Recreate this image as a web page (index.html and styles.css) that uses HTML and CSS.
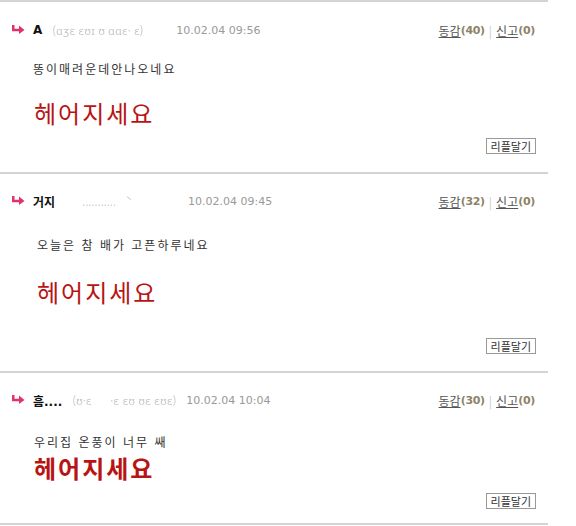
FILE: index.html
```html
<!DOCTYPE html>
<html lang="ko">
<head>
  <meta charset="UTF-8" />
  <title>댓글</title>
  <link rel="stylesheet" href="styles.css">
</head>
<body>
  <div class="list">
    <div class="comment c1">
      <div class="head">
        <svg class="arrow" width="13" height="9" viewBox="0 0 13 9"><path d="M1.2 0 V5 H8" fill="none" stroke="#e0336a" stroke-width="2.6"/><path d="M7 0.5 L12.5 5 L7 9 Z" fill="#e0336a"/></svg>
        <span class="name">A</span>
        <span class="uid" style="width:124px">(ɑʒɛ ɛʊɪ ʊ  ɑɑɛ·   ɛ)</span>
        <span class="date">10.02.04 09:56</span>
        <span class="acts"><a>동감</a><b>(40)</b><i>|</i><a>신고</a><b>(0)</b></span>
      </div>
      <p class="text">똥이매려운데안나오네요</p>
      <p class="big">헤어지세요</p>
      <div class="foot"><button>리플달기</button></div>
    </div>

    <div class="comment c2">
      <div class="head">
        <svg class="arrow" width="13" height="9" viewBox="0 0 13 9"><path d="M1.2 0 V5 H8" fill="none" stroke="#e0336a" stroke-width="2.6"/><path d="M7 0.5 L12.5 5 L7 9 Z" fill="#e0336a"/></svg>
        <span class="name">거지</span>
        <span class="uid" style="width:123px">&nbsp;&nbsp;&nbsp;&nbsp;&nbsp;&nbsp;&nbsp;........... &nbsp;&nbsp; ˋ</span>
        <span class="date">10.02.04 09:45</span>
        <span class="acts"><a>동감</a><b>(32)</b><i>|</i><a>신고</a><b>(0)</b></span>
      </div>
      <p class="text">오늘은 참 배가 고픈하루네요</p>
      <p class="big">헤어지세요</p>
      <div class="foot"><button>리플달기</button></div>
    </div>

    <div class="comment c3">
      <div class="head">
        <svg class="arrow" width="13" height="9" viewBox="0 0 13 9"><path d="M1.2 0 V5 H8" fill="none" stroke="#e0336a" stroke-width="2.6"/><path d="M7 0.5 L12.5 5 L7 9 Z" fill="#e0336a"/></svg>
        <span class="name">흠....</span>
        <span class="uid" style="width:114px">(ʊ·ɛ &nbsp;&nbsp;&nbsp;&nbsp; ·ɛ ɛʊ ʊɛ ɛʊɛ)</span>
        <span class="date">10.02.04 10:04</span>
        <span class="acts"><a>동감</a><b>(30)</b><i>|</i><a>신고</a><b>(0)</b></span>
      </div>
      <p class="text">우리집 온풍이 너무 쌔</p>
      <p class="big">헤어지세요</p>
      <div class="foot"><button>리플달기</button></div>
    </div>
  </div>
</body>
</html>
```

FILE: styles.css
```css
body {
  margin: 0;
  background: #fff;
  font-family: "Noto Sans CJK KR", "DejaVu Sans", sans-serif;
  color: #333;
}

.list {
  width: 548px;
  border-top: 2px solid #d4d4d4;
}

.comment {
  border-bottom: 2px solid #d4d4d4;
  box-sizing: border-box;
}

.head {
  display: flex;
  align-items: center;
  height: 16px;
  padding: 0 13px 0 12px;
  font-size: 12px;
}

.arrow {
  flex: none;
  margin-top: -2px;
}

.name {
  margin-left: 8px;
  font-weight: bold;
  color: #111;
  font-family: "DejaVu Sans", "Noto Sans CJK KR", sans-serif;
  font-size: 12px;
}

.uid {
  flex: none;
  display: inline-block;
  padding-left: 10px;
  color: #c8c8c8;
  font-size: 11px;
  white-space: nowrap;
  overflow: hidden;
  filter: blur(0.7px);
}

.date {
  color: #999;
  font-family: "DejaVu Sans", sans-serif;
  font-size: 11px;
}

.acts {
  margin-left: auto;
  display: flex;
  align-items: center;
  font-size: 12px;
}

.acts a {
  color: #555;
  text-decoration: underline;
}

.acts b {
  color: #8f8266;
  font-family: "DejaVu Sans", sans-serif;
  font-size: 11px;
  letter-spacing: -0.3px;
}

.acts i {
  font-style: normal;
  color: #ccc;
  margin: 0 4px 0 4px;
}

.text {
  margin: 0;
  font-size: 12px;
  line-height: 16px;
  letter-spacing: 2px;
  color: #333;
}

.big {
  margin: 0;
  font-size: 24px;
  line-height: 28px;
  letter-spacing: 2px;
  color: #b81414;
}

.foot {
  display: flex;
  justify-content: flex-end;
  padding-right: 12px;
}

.foot button {
  font-family: "Noto Sans CJK KR", sans-serif;
  font-size: 11px;
  line-height: 14px;
  padding: 0 4px;
  color: #333;
  background: #fff;
  border: 1px solid #999;
  border-radius: 0;
}

/* spacing per comment, as in the capture */
.c1 { height: 172px; padding-top: 20px; }
.c1 .text { margin: 23px 0 0 33px; }
.c1 .big { margin: 22px 0 0 34px; }
.c1 .foot { margin-top: 11px; }

.c2 { height: 199px; padding-top: 19px; }
.c2 .text { margin: 28px 0 0 37px; }
.c2 .big { margin: 25px 0 0 37px; }
.c2 .foot { margin-top: 32px; }

.c3 { height: 152px; padding-top: 19px; }
.c3 .text { margin: 26px 0 0 34px; }
.c3 .big { margin: 6px 0 0 34px; line-height: 24px; font-weight: bold; }
.c3 .foot { margin-top: 13px; }
```
